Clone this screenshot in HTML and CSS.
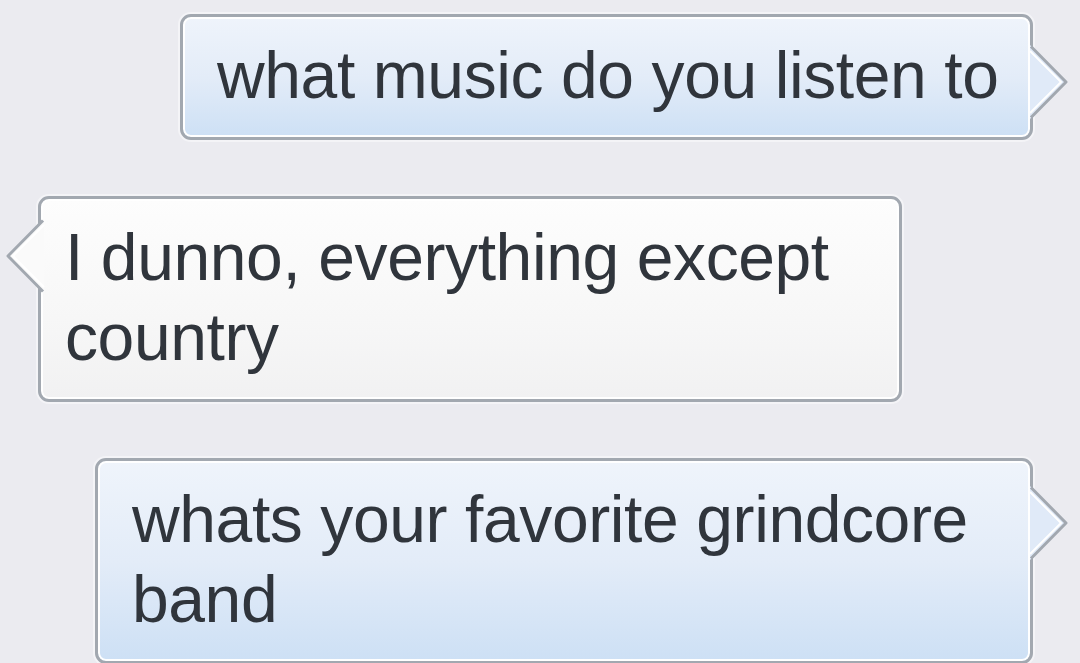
FILE: index.html
```html
<!DOCTYPE html>
<html>
  <head>
    <meta name="viewport" content="width=device-width, initial-scale=1" />
    <link rel="stylesheet" href="styles.css">
  </head>

  <body>
    <div class="chat">

      <div class="bubble sent first">
        what music do you listen to
        <svg class="tail tail-right" viewBox="0 0 41 74" width="41" height="74">
          <polygon points="0,0 37,37 0,74" class="tail-fill-blue" />
          <path d="M1,1.5 L36,37 L1,72.5" class="tail-line" />
          <path d="M0,6 L31,37 L0,68" class="tail-glow" />
        </svg>
      </div>

      <div class="bubble received second">
        I dunno, everything except country
        <svg class="tail tail-left" viewBox="0 0 41 74" width="41" height="74">
          <polygon points="0,0 37,37 0,74" class="tail-fill-white" />
          <path d="M1,1.5 L36,37 L1,72.5" class="tail-line" />
          <path d="M0,6 L31,37 L0,68" class="tail-glow" />
        </svg>
      </div>

      <div class="bubble sent third">
        whats your favorite grindcore band
        <svg class="tail tail-right" viewBox="0 0 41 74" width="41" height="74">
          <polygon points="0,0 37,37 0,74" class="tail-fill-blue" />
          <path d="M1,1.5 L36,37 L1,72.5" class="tail-line" />
          <path d="M0,6 L31,37 L0,68" class="tail-glow" />
        </svg>
      </div>

    </div>
  </body>
</html>
```

FILE: styles.css
```css
body {
  margin: 0;
  background-color: #ebebf0;
  font-family: "Liberation Sans", Arial, Helvetica, sans-serif;
  overflow: hidden;
}

.chat {
  display: flex;
  flex-direction: column;
  gap: 56px;
  padding-top: 14px;
  height: 663px;
  box-sizing: border-box;
  filter: blur(0.4px);
}

.bubble {
  position: relative;
  box-sizing: border-box;
  border: 3px solid #a2a8b0;
  border-radius: 11px;
  padding: 18px 20px 22px 34px;
  font-size: 66px;
  line-height: 80px;
  color: #30353c;
  letter-spacing: -0.4px;
  box-shadow: 0 0 0 2px #f4f4f7, inset 0 0 0 2px #ffffff;
}

.sent {
  background: linear-gradient(to bottom, #eff4fb 0%, #e3ecf8 50%, #cde0f5 100%);
}

.received {
  background: linear-gradient(to bottom, #fdfdfd 0%, #f7f7f7 60%, #f1f1f2 100%);
  padding-left: 24px;
}

.first {
  margin-left: 180px;
  width: 853px;
  white-space: nowrap;
}

.second {
  margin-left: 38px;
  width: 864px;
}

.third {
  margin-left: 95px;
  width: 938px;
}

.tail {
  position: absolute;
  top: 25px;
  overflow: visible;
}

.tail-right {
  right: -41px;
}

.tail-left {
  left: -38px;
  transform: scaleX(-1);
}

.first .tail {
  top: 28px;
}

.second .tail {
  top: 20px;
}

.tail-fill-blue {
  fill: #e0eaf8;
}

.tail-fill-white {
  fill: #fafafa;
}

.tail-line {
  fill: none;
  stroke: #a2a8b0;
  stroke-width: 3;
  stroke-linejoin: round;
}

.tail-glow {
  fill: none;
  stroke: #ffffff;
  stroke-width: 2;
}
```
